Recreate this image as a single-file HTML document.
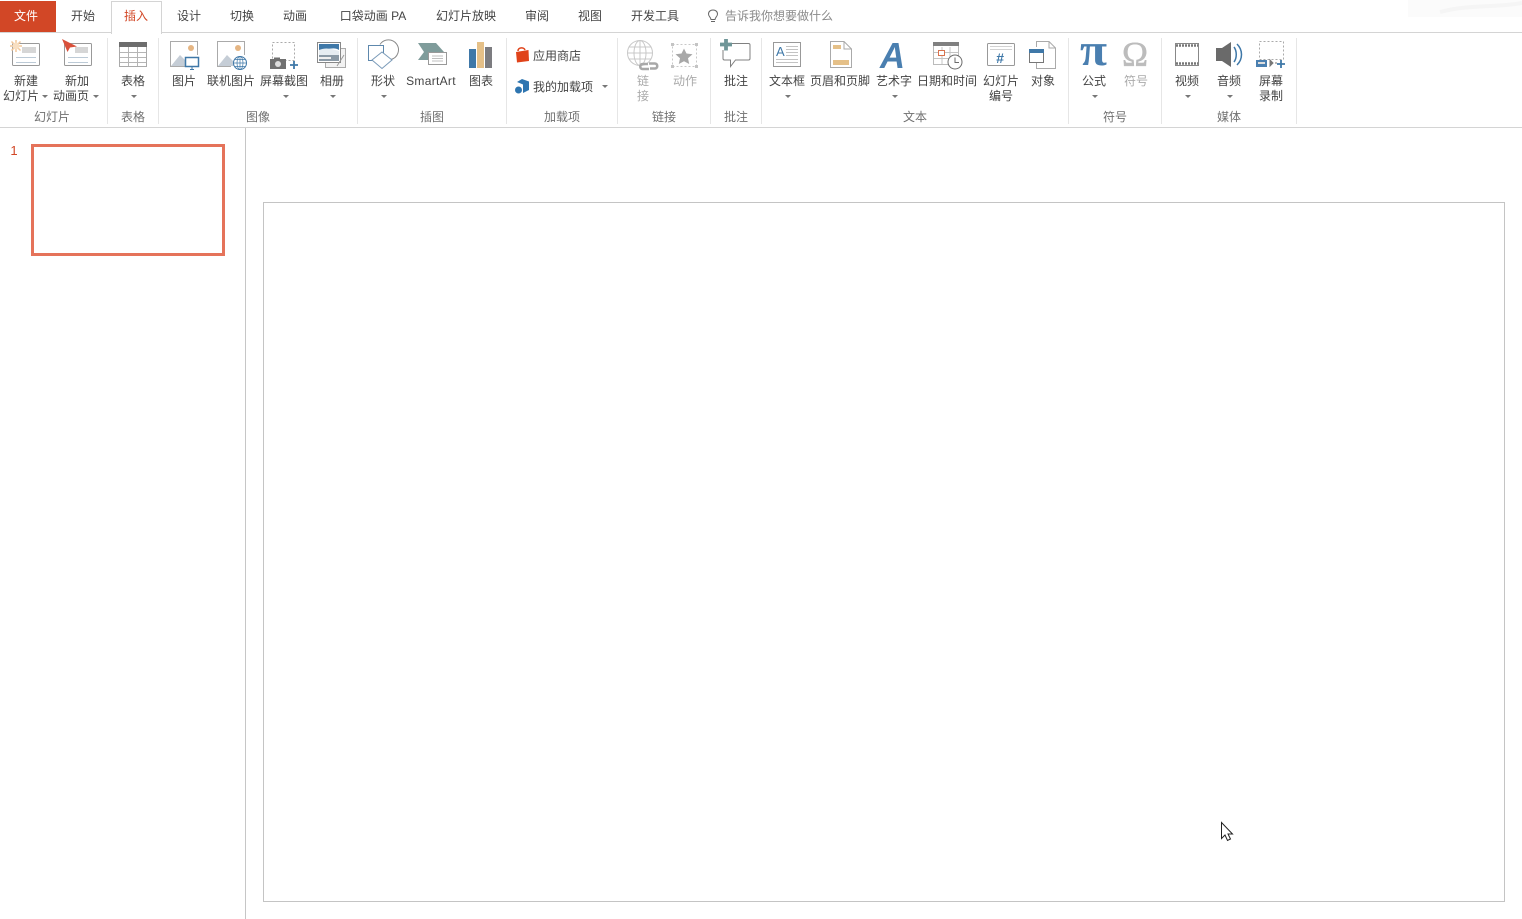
<!DOCTYPE html>
<html lang="zh-CN">
<head>
<meta charset="utf-8">
<title>PowerPoint</title>
<style>
html,body{margin:0;padding:0;background:#fff;width:1522px;height:919px;overflow:hidden}
body{position:relative;font-family:"Liberation Sans","Noto Sans CJK SC",sans-serif;font-size:12px;color:#444}
.t{position:absolute;transform:translateX(-50%);white-space:nowrap;line-height:16px;font-size:12px;color:#444}
.l{position:absolute;white-space:nowrap;line-height:16px;font-size:12px;color:#444}
.g{color:#707070}
.d{color:#aaa}
.a{position:absolute;width:0;height:0;border-left:3px solid transparent;border-right:3px solid transparent;border-top:3px solid #777}
.s{position:absolute;top:38px;height:86px;width:1px;background:#e6e6e6}
#file{position:absolute;left:0;top:1px;width:56px;height:31px;background:#d24726}
#tabline{position:absolute;left:0;top:32px;width:1522px;height:1px;background:#d4d4d4}
#active{position:absolute;left:111px;top:1px;width:49px;height:32px;border:1px solid #d4d4d4;border-bottom:0;background:#fff}
#rb{position:absolute;left:0;top:127px;width:1522px;height:1px;background:#d4d4d4}
#side{position:absolute;left:245px;top:128px;width:1px;height:791px;background:#c6c6c6}
#thumb{position:absolute;left:31px;top:144px;width:188px;height:106px;border:3px solid #e5735a;background:#fff}
#slide{position:absolute;left:263px;top:202px;width:1240px;height:698px;border:1px solid #c4c4c4;background:#fff}
svg{position:absolute;left:0;top:0}
</style>
</head>
<body>
<div id="file"></div>
<div id="tabline"></div>
<div id="active"></div>
<div id="rb"></div>
<div id="side"></div>
<div id="thumb"></div>
<div id="slide"></div>

<div class="s" style="left:107px"></div>
<div class="s" style="left:158px"></div>
<div class="s" style="left:357px"></div>
<div class="s" style="left:506px"></div>
<div class="s" style="left:617px"></div>
<div class="s" style="left:710px"></div>
<div class="s" style="left:761px"></div>
<div class="s" style="left:1068px"></div>
<div class="s" style="left:1161px"></div>
<div class="s" style="left:1296px"></div>

<svg width="1522" height="919" viewBox="0 0 1522 919" fill="none">
  <!-- top right decoration -->
  <path d="M1408 17V0H1522V17Z" fill="#fbfbfb"/>
  <path d="M1440 12C1470 4 1495 8 1522 3" stroke="#f5f5f5" stroke-width="4"/>
  <!-- bulb -->
  <path d="M711 19.500C711 17.500 708.500 16.500 708.500 14C708.500 11.500 710.500 10 713 10C715.500 10 717.500 11.500 717.500 14C717.500 16.500 715 17.500 715 19.500Z" stroke="#666"/>
  <path d="M711 21.500H715" stroke="#666"/>

  <!-- new slide -->
  <rect x="12.500" y="43.500" width="27" height="22" rx="1" fill="#fff" stroke="#999"/>
  <rect x="22" y="47" width="14" height="6" fill="#d6d6d6"/>
  <path d="M16 57.500H36M16 62.500H36" stroke="#bccad6"/>
  <g stroke="#f2c79a" stroke-width="1.500"><path d="M16 40V52M10 46H22M11.500 41.500L20.500 50.500M20.500 41.500L11.500 50.500"/></g>
  <circle cx="16" cy="46" r="3.500" fill="#f8dfc2"/>
  <!-- new anim -->
  <rect x="64.500" y="43.500" width="27" height="22" rx="1" fill="#fff" stroke="#999"/>
  <rect x="75" y="47" width="13" height="6" fill="#d6d6d6"/>
  <path d="M68 57.500H88M68 62.500H88" stroke="#bccad6"/>
  <path d="M62 39L77 46.500L70 47.500L67.500 52Z" fill="#d9503a"/>
  <!-- table -->
  <rect x="119.500" y="42.500" width="27" height="24" fill="#fff" stroke="#aaa"/>
  <rect x="119" y="42" width="28" height="5" fill="#6d6d6d"/>
  <path d="M128.500 47V66M137.500 47V66M120 52.500H146M120 57.500H146M120 62.500H146" stroke="#b5b5b5"/>
  <!-- picture -->
  <path d="M185 66.500H170.500V41.500H197.500V55" stroke="#aaa" fill="#fff"/>
  <circle cx="191" cy="48" r="3" fill="#e5b583"/>
  <path d="M171 66L180 55L187 62V66Z" fill="#c5cdd6"/>
  <rect x="185.500" y="57.500" width="13" height="9" fill="#fff" stroke="#3f78a8" stroke-width="1.500"/>
  <path d="M190 69.500H194M192 67V69" stroke="#3f78a8"/>
  <!-- online picture -->
  <path d="M231 66.500H217.500V41.500H244.500V55" stroke="#aaa" fill="#fff"/>
  <circle cx="238" cy="48" r="3" fill="#e5b583"/>
  <path d="M218 66L227 55L234 62V66Z" fill="#c5cdd6"/>
  <circle cx="240" cy="63" r="6.500" fill="#fff" stroke="#3f78a8"/>
  <path d="M233.500 63H246.500M240 56.500V69.500M235 59.500H245M235 66.500H245" stroke="#3f78a8" stroke-width=".7"/>
  <ellipse cx="240" cy="63" rx="3" ry="6.500" stroke="#3f78a8" stroke-width=".7"/>
  <!-- screenshot -->
  <rect x="272.500" y="42.500" width="22" height="18" stroke="#aaa" stroke-dasharray="2 2"/>
  <rect x="270" y="59" width="16" height="10" fill="#707070"/>
  <rect x="274" y="57.500" width="6" height="2" fill="#707070"/>
  <circle cx="278" cy="64" r="3" fill="#ddd"/>
  <path d="M294 61V69M290 65H298" stroke="#3f78a8" stroke-width="1.800"/>
  <!-- album -->
  <rect x="325.500" y="48.500" width="20" height="19" fill="#f2f2f2" stroke="#aaa"/>
  <rect x="317.500" y="42.500" width="23" height="20" fill="#fff" stroke="#888"/>
  <path d="M319 44H339V50C333 46 326 51 319 50Z" fill="#3f78a8"/>
  <path d="M319 50C326 47 332 49 339 51V55H319Z" fill="#e6edf2"/>
  <path d="M319 55H339V61H319Z" fill="#8b9aa6"/>
  <path d="M319 57H331V59H319Z" fill="#efefef"/>
  <path d="M337 66L344 55" stroke="#999"/>

  <!-- shapes -->
  <rect x="368.500" y="45.500" width="15" height="15" fill="#fff" stroke="#5e88ad"/>
  <path d="M380 44.500A10 10 0 1 1 391 59.500" stroke="#8a8a8a" fill="none"/>
  <path d="M382 52L392 60L382 68.500L372 60Z" fill="#fff" stroke="#7a9ab8"/>
  <!-- smartart -->
  <path d="M418 43H436L444 52L436 60H418L424 52Z" fill="#7f9c9b"/>
  <rect x="428.500" y="52.500" width="18" height="12" fill="#fff" stroke="#999"/>
  <path d="M432 56H443M432 58.500H443M432 61H443" stroke="#aaa" stroke-width=".8"/>
  <!-- chart -->
  <rect x="469" y="49" width="7" height="19" fill="#3f78a8"/>
  <rect x="477" y="42" width="7" height="26" fill="#e5c088"/>
  <rect x="485" y="47" width="7" height="21" fill="#7c7c80"/>
  <!-- store -->
  <path d="M516 52L528.500 50L529 61L517 62.500Z" fill="#e0431a"/>
  <path d="M518 51C518 47 524 47 525 50" stroke="#e0431a" stroke-width="1.500"/>
  <!-- addins -->
  <path d="M522 79L529 81.500V90L523 93V84.500L517 82Z" fill="#2e75b0"/>
  <circle cx="518.500" cy="90" r="3.500" fill="#2e75b0"/>

  <!-- link -->
  <circle cx="640" cy="53" r="12.500" fill="#fff" stroke="#c8c8c8"/>
  <ellipse cx="640" cy="53" rx="6" ry="12.500" stroke="#c8c8c8"/>
  <path d="M627.500 53H652.500M640 40.500V65.500M629 47H651M629 59H651" stroke="#c8c8c8"/>
  <path d="M648 64H642.500C639.500 64 639.500 69 642.500 69H649M649 63.500H655C658 63.500 658 68.500 655 68.500H650" stroke="#a8a8a8" stroke-width="2.500" fill="none"/>
  <!-- action -->
  <rect x="672.500" y="44.500" width="24" height="22" stroke="#c8c8c8" stroke-dasharray="2 2"/>
  <path d="M671 43h3v3h-3zM695 43h3v3h-3zM671 65h3v3h-3zM695 65h3v3h-3z" fill="#c4c4c4"/>
  <path d="M684 48.500L686.500 53.500L692.500 54.300L688 58.300L689.200 64L684 61.200L678.800 64L680 58.300L675.500 54.300L681.500 53.500Z" fill="#a8a8a8"/>
  <!-- comment -->
  <path d="M732 43.500H748.500Q750 43.500 750 45V58.500Q750 60 748.500 60H735.500L730.500 66.500V60H724.500Q723 60 723 58.500V50" fill="#fff" stroke="#808080"/>
  <path d="M726 39V50.500M720 44.500H732" stroke="#6f9698" stroke-width="3.800"/>

  <!-- textbox -->
  <rect x="773.500" y="42.500" width="27" height="24" fill="#fff" stroke="#999"/>
  <text x="776" y="56" font-family="Liberation Sans" font-size="13" fill="#3f78a8">A</text>
  <path d="M786 46.500H798M786 49.500H798M786 52.500H798M786 55.500H798M776 59.500H798M776 62.500H798" stroke="#b0b0b0" stroke-width=".8"/>
  <!-- header -->
  <path d="M830.500 41.500H844L851.500 49V67.500H830.500Z" fill="#fff" stroke="#aaa"/>
  <path d="M844 41.500V49H851.500" stroke="#aaa"/>
  <rect x="833" y="45" width="8" height="4" fill="#e5c088"/>
  <rect x="833" y="60" width="16" height="5" fill="#e5c088"/>
  <!-- wordart -->
  <text x="880" y="68" font-family="Liberation Sans" font-weight="bold" font-style="italic" font-size="36" fill="#4a7fb0" textLength="25" lengthAdjust="spacingAndGlyphs">A</text>
  <!-- date -->
  <rect x="933.500" y="42.500" width="25" height="22" fill="#fff" stroke="#bbb"/>
  <rect x="933" y="42" width="26" height="4" fill="#808080"/>
  <path d="M942 47V64M950 47V64M934 52.500H958M934 58.500H958" stroke="#c4c4c4"/>
  <rect x="938.500" y="50.500" width="6" height="5" fill="#fff" stroke="#d9734f"/>
  <circle cx="955" cy="62" r="7" fill="#fff" stroke="#6b6b6b"/>
  <path d="M955 57.500V62.500H959" stroke="#6b6b6b"/>
  <!-- slide number -->
  <rect x="987.500" y="43.500" width="27" height="22" rx="1" fill="#fff" stroke="#999"/>
  <path d="M990 46.500H1012M990 49.500H1012" stroke="#c4c4c4" stroke-width=".8"/>
  <text x="996" y="63" font-family="Liberation Sans" font-weight="bold" font-style="italic" font-size="14" fill="#3f78a8">#</text>
  <!-- object -->
  <path d="M1036.500 47V41.500H1049L1055.500 48V68.500H1036.500V62" fill="#fff" stroke="#aaa"/>
  <path d="M1049 41.500V48H1055.500" stroke="#aaa"/>
  <rect x="1029.500" y="49.500" width="14" height="13" fill="#fff" stroke="#777"/>
  <rect x="1029" y="49" width="15" height="4" fill="#3f78a8"/>

  <!-- pi -->
  <text x="1080" y="65" font-family="Liberation Serif" font-weight="bold" font-size="46" fill="#4a7fb0" textLength="27" lengthAdjust="spacingAndGlyphs">π</text>
  <!-- omega -->
  <text x="1122" y="66" font-family="Liberation Serif" font-size="35" fill="#bcbcbc" stroke="#bcbcbc" stroke-width=".5">Ω</text>
  <!-- video -->
  <rect x="1175.500" y="43.500" width="23" height="22" fill="#fff" stroke="#888"/>
  <path d="M1176 45.500H1198M1176 63.500H1198" stroke="#777" stroke-width="2.500" stroke-dasharray="2 1"/>
  <!-- audio -->
  <path d="M1216 48H1222L1231 42V67L1222 61H1216Z" fill="#6a6a6a"/>
  <path d="M1234 47C1237 51 1237 58 1234 62" stroke="#3f78a8" stroke-width="1.500"/>
  <path d="M1237 44C1243 50 1243 59 1237 65" stroke="#3f78a8" stroke-width="1.500"/>
  <!-- record -->
  <rect x="1259.500" y="41.500" width="24" height="18" stroke="#aaa" stroke-dasharray="2 2"/>
  <rect x="1256" y="60" width="11" height="7" fill="#4a7fb0"/>
  <rect x="1258" y="62" width="7" height="2" fill="#ddd"/>
  <path d="M1270 60V66L1273 63ZM1275 63H1277" fill="#777" stroke="#777"/>
  <path d="M1281 60V68M1277 64H1285" stroke="#3f78a8" stroke-width="1.800"/>

  <!-- cursor -->
  <path d="M1221.500 822.500V838.500L1225 835L1227.500 840.500L1230.500 839L1228 834H1232.500Z" fill="#fff" stroke="#222" stroke-width="1"/>
</svg>

<!-- tabs -->
<span class="t" style="left:26px;top:8px;color:#fff">文件</span>
<span class="t" style="left:83px;top:8px">开始</span>
<span class="t" style="left:136px;top:8px;color:#d24726">插入</span>
<span class="t" style="left:189px;top:8px">设计</span>
<span class="t" style="left:242px;top:8px">切换</span>
<span class="t" style="left:295px;top:8px">动画</span>
<span class="t" style="left:373px;top:8px">口袋动画 PA</span>
<span class="t" style="left:466px;top:8px">幻灯片放映</span>
<span class="t" style="left:537px;top:8px">审阅</span>
<span class="t" style="left:590px;top:8px">视图</span>
<span class="t" style="left:655px;top:8px">开发工具</span>
<span class="l" style="left:725px;top:8px;color:#8a8a8a">告诉我你想要做什么</span>

<!-- labels -->
<span class="t" style="left:26px;top:73px">新建</span>
<span class="t" style="left:21px;top:88px">幻灯片</span><i class="a" style="left:42px;top:95px"></i>
<span class="t" style="left:77px;top:73px">新加</span>
<span class="t" style="left:71px;top:88px">动画页</span><i class="a" style="left:93px;top:95px"></i>
<span class="t g" style="left:52px;top:109px">幻灯片</span>

<span class="t" style="left:133px;top:73px">表格</span><i class="a" style="left:131px;top:95px"></i>
<span class="t g" style="left:133px;top:109px">表格</span>

<span class="t" style="left:184px;top:73px">图片</span>
<span class="t" style="left:231px;top:73px">联机图片</span>
<span class="t" style="left:284px;top:73px">屏幕截图</span><i class="a" style="left:283px;top:95px"></i>
<span class="t" style="left:332px;top:73px">相册</span><i class="a" style="left:330px;top:95px"></i>
<span class="t g" style="left:258px;top:109px">图像</span>

<span class="t" style="left:383px;top:73px">形状</span><i class="a" style="left:381px;top:95px"></i>
<span class="t" style="left:431px;top:73px;letter-spacing:.3px">SmartArt</span>
<span class="t" style="left:481px;top:73px">图表</span>
<span class="t g" style="left:432px;top:109px">插图</span>

<span class="l" style="left:533px;top:48px">应用商店</span>
<span class="l" style="left:533px;top:79px">我的加载项</span><i class="a" style="left:602px;top:85px"></i>
<span class="t g" style="left:562px;top:109px">加载项</span>

<span class="t d" style="left:643px;top:73px">链</span>
<span class="t d" style="left:643px;top:88px">接</span>
<span class="t d" style="left:685px;top:73px">动作</span>
<span class="t g" style="left:664px;top:109px">链接</span>

<span class="t" style="left:736px;top:73px">批注</span>
<span class="t g" style="left:736px;top:109px">批注</span>

<span class="t" style="left:787px;top:73px">文本框</span><i class="a" style="left:785px;top:95px"></i>
<span class="t" style="left:840px;top:73px">页眉和页脚</span>
<span class="t" style="left:894px;top:73px">艺术字</span><i class="a" style="left:892px;top:95px"></i>
<span class="t" style="left:947px;top:73px">日期和时间</span>
<span class="t" style="left:1001px;top:73px">幻灯片</span>
<span class="t" style="left:1001px;top:88px">编号</span>
<span class="t" style="left:1043px;top:73px">对象</span>
<span class="t g" style="left:915px;top:109px">文本</span>

<span class="t" style="left:1094px;top:73px">公式</span><i class="a" style="left:1092px;top:95px"></i>
<span class="t d" style="left:1136px;top:73px">符号</span>
<span class="t g" style="left:1115px;top:109px">符号</span>

<span class="t" style="left:1187px;top:73px">视频</span><i class="a" style="left:1185px;top:95px"></i>
<span class="t" style="left:1229px;top:73px">音频</span><i class="a" style="left:1227px;top:95px"></i>
<span class="t" style="left:1271px;top:73px">屏幕</span>
<span class="t" style="left:1271px;top:88px">录制</span>
<span class="t g" style="left:1229px;top:109px">媒体</span>

<span class="t" style="left:14px;top:143px;color:#d24726;font-size:13px">1</span>
</body>
</html>
